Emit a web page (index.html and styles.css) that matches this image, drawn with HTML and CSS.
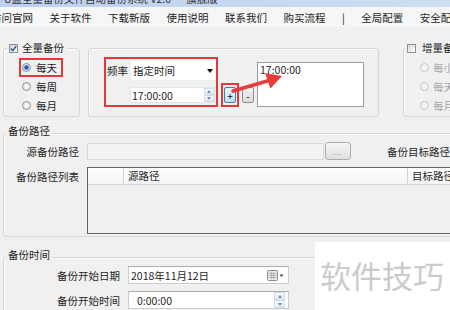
FILE: index.html
```html
<!DOCTYPE html>
<html lang="zh-CN">
<head>
  <meta charset="UTF-8" />
  <title>全量备份设置</title>
  <link rel="stylesheet" href="styles.css">
</head>
<body>
  <div class="window">
    <div class="titlebar"><span>U盘全量备份文件自动备份系统 V2.0 — 旗舰版</span></div>

    <div class="menubar">
      <span class="menu-item first">访问官网</span>
      <span class="menu-item">关于软件</span>
      <span class="menu-item">下载新版</span>
      <span class="menu-item">使用说明</span>
      <span class="menu-item">联系我们</span>
      <span class="menu-item">购买流程</span>
      <span class="menu-item">|</span>
      <span class="menu-item">全局配置</span>
      <span class="menu-item">安全配置</span>
    </div>

    <div class="top-row">
      <div class="group group-full">
        <div class="group-title">
          <span class="check">
            <svg width="7" height="7" viewBox="0 0 7 7"><path d="M0.8 3.6 L2.8 5.6 L6.2 1" fill="none" stroke="#3d5a98" stroke-width="1.5"/></svg>
          </span>全量备份
        </div>
        <div class="opts">
          <div class="opt marked"><span class="radio on"></span>每天</div>
          <div class="opt"><span class="radio"></span>每周</div>
          <div class="opt"><span class="radio"></span>每月</div>
        </div>
      </div>

      <div class="group group-freq">
        <div class="mark-box freq-box">
          <div class="freq-row">
            <span class="freq-label">频率</span>
            <div class="select">指定时间<span class="caret"></span></div>
          </div>
          <div class="time-input">17:00:00<span class="spin"><i class="up"></i><i class="down"></i></span></div>
        </div>
        <div class="mark-box add-box"><button class="btn btn-add">+</button></div>
        <button class="btn btn-minus">-</button>
        <div class="time-list">17:00:00</div>
      </div>

      <div class="group group-inc">
        <div class="group-title"><span class="check"></span>增量备份</div>
        <div class="opts">
          <div class="opt disabled"><span class="radio"></span>每小时</div>
          <div class="opt disabled"><span class="radio"></span>每天</div>
          <div class="opt disabled"><span class="radio"></span>每月</div>
        </div>
      </div>
    </div>

    <div class="group group-wide paths">
      <div class="group-title">备份路径</div>
      <div class="form-row">
        <span class="label">源备份路径</span>
        <div class="path-input"></div>
        <button class="btn btn-browse">...</button>
        <span class="target-label">备份目标路径</span>
      </div>
      <div class="form-row list-row">
        <span class="label">备份路径列表</span>
        <div class="path-table">
          <div class="path-head">
            <span class="col col-idx"></span>
            <span class="col col-src">源路径</span>
            <span class="col col-dst">目标路径</span>
          </div>
        </div>
      </div>
    </div>

    <div class="group group-wide times">
      <div class="group-title">备份时间</div>
      <div class="form-row">
        <span class="label wide">备份开始日期</span>
        <div class="field">2018年11月12日
          <svg class="cal" width="18" height="11" viewBox="0 0 18 11">
            <rect x="0.5" y="0.5" width="10" height="10" rx="1" fill="#e6e6e6" stroke="#8d8d8d"/>
            <path d="M2 3.5h7M2 5.5h7M2 7.5h7M4.5 2v7M6.5 2v7" stroke="#a9a9a9" stroke-width="0.8"/>
            <path d="M12.5 4.5h4l-2 2.5z" fill="#444"/>
          </svg>
        </div>
      </div>
      <div class="form-row">
        <span class="label wide">备份开始时间</span>
        <div class="field time">0:00:00<span class="spin"><i class="up"></i><i class="down"></i></span></div>
      </div>
    </div>

    <svg class="arrow" width="60" height="32" viewBox="0 0 60 32">
      <path d="M5 26 L41 15.5" stroke="#e8393b" stroke-width="3.5" stroke-linecap="round"/>
      <path d="M54 11 L42.4 23.5 L37.2 8.3 Z" fill="#e8393b"/>
    </svg>
    <div class="watermark">软件技巧</div>
  </div>
</body>
</html>
```

FILE: styles.css
```css
body {
  margin: 0;
  background: #f0f0f0;
  font-family: "Noto Sans CJK SC", "Liberation Sans", sans-serif;
  font-size: 10.5px;
  color: #1e1e1e;
  overflow: hidden;
}
.window {
  position: relative;
  width: 640px;
  height: 310px;
}
.titlebar {
  height: 7px;
  overflow: hidden;
  padding-left: 4px;
  background: linear-gradient(90deg, #bcd1ee, #d5e3f5);
  color: #333;
}
.titlebar span {
  display: block;
  line-height: 12px;
  margin-top: -7px;
}
.menubar {
  height: 20px;
  display: flex;
  align-items: center;
  gap: 16.5px;
  background: #f6f6f6;
  white-space: nowrap;
}
.menu-item.first {
  margin-left: -9px;
}

/* group boxes */
.group {
  border: 1px solid #d6d6d6;
  border-radius: 3px;
  box-shadow: inset 1px 1px 0 #fbfbfb;
  box-sizing: border-box;
}
.group-title {
  display: flex;
  align-items: center;
  gap: 4px;
  width: max-content;
  height: 12px;
  line-height: 12px;
  margin: -7px 0 0 3px;
  padding: 0 2px;
  background: #f0f0f0;
}
.check {
  width: 9px;
  height: 9px;
  border: 1px solid #8e8f8f;
  box-sizing: border-box;
  background: linear-gradient(135deg, #d6d6d6, #fdfdfd);
  display: flex;
  align-items: center;
  justify-content: center;
}
.radio {
  width: 9px;
  height: 9px;
  border-radius: 50%;
  border: 1px solid #8e8f8f;
  box-sizing: border-box;
  background: radial-gradient(circle, #fdfdfd, #d9d9d9);
  flex: none;
}
.radio.on {
  background: radial-gradient(circle, #1d4f9f 0, #2f66b8 1.6px, #a8c8ea 2.6px, #f4f4f4 3.4px);
}
.top-row {
  display: flex;
  margin: 21px 0 0 3px;
}
.group-full {
  width: 77px;
}
.opts {
  padding: 4px 0 1px;
}
.opt {
  width: 44px;
  height: 19px;
  display: flex;
  align-items: center;
  gap: 5px;
  margin-left: 15px;
  padding-left: 3px;
  box-sizing: border-box;
  white-space: nowrap;
}
.opt.marked {
  outline: 2px solid #e4393c;
  outline-offset: -2px;
}
.group-inc {
  width: 200px;
  margin-left: 24px;
}
.group-inc .group-title {
  margin-left: 1px;
  gap: 6px;
}
.group-inc .opt {
  margin-left: 13px;
  gap: 4px;
}
.opt.disabled {
  color: #a6a6a6;
}
.opt.disabled .radio {
  border-color: #c6c6c6;
  background: #f3f3f3;
}

/* frequency box */
.group-freq {
  width: 291px;
  margin-left: 8px;
  display: flex;
  align-items: flex-start;
  padding: 8px 0 0 15px;
}
.mark-box {
  border: 2px solid #e4393c;
  box-sizing: border-box;
}
.freq-box {
  width: 114px;
  height: 50px;
}
.freq-row {
  display: flex;
  align-items: center;
  gap: 3px;
  margin-top: 2px;
}
.freq-label {
  margin-left: 1px;
}
.select {
  width: 85px;
  height: 19px;
  background: #fff;
  display: flex;
  align-items: center;
  justify-content: space-between;
  padding: 0 3px 0 2px;
  box-sizing: border-box;
}
.caret {
  border-top: 4px solid #111;
  border-left: 3px solid transparent;
  border-right: 3px solid transparent;
}
.time-input {
  width: 85px;
  height: 16px;
  margin: 7px 0 0 24px;
  background: #fff;
  border: 1px solid #e2e5ea;
  box-sizing: border-box;
  display: flex;
  align-items: center;
  justify-content: space-between;
  padding-left: 1px;
}
.spin {
  width: 10px;
  height: 100%;
  display: flex;
  flex-direction: column;
}
.spin i {
  flex: 1;
  display: flex;
  align-items: center;
  justify-content: center;
  background: linear-gradient(#f5f8fb, #e3eaf2);
  border: 1px solid #d4dce6;
  box-sizing: border-box;
}
.spin i::after {
  content: "";
  border-left: 2.5px solid transparent;
  border-right: 2.5px solid transparent;
}
.spin .up::after {
  border-bottom: 3px solid #6f8fb3;
}
.spin .down::after {
  border-top: 3px solid #6f8fb3;
}
.add-box {
  margin: 26px 0 0 3px;
  padding: 2px 1px;
}
.btn {
  font-family: inherit;
  padding: 0;
  box-sizing: border-box;
  display: flex;
  align-items: center;
  justify-content: center;
  color: #111;
}
.btn-add {
  width: 12px;
  height: 16px;
  font-size: 10px;
  border: 1px solid #3c7fb1;
  border-radius: 2px;
  background: linear-gradient(#eaf6fd, #bfe4f8);
}
.btn-minus {
  width: 12px;
  height: 16px;
  font-size: 10px;
  margin: 30px 0 0 3px;
  border: 1px solid #8f8f8f;
  border-radius: 2px;
  background: linear-gradient(#f4f4f4, #d9d9d9);
}
.time-list {
  width: 107px;
  height: 45px;
  margin: 5px 0 0 3px;
  background: #fff;
  border: 1px solid #9d9d9d;
  box-sizing: border-box;
  padding: 1px 2px 0;
  line-height: 12px;
}

/* path and time groups */
.group-wide {
  width: 620px;
  margin-left: 3px;
}
.group-wide .group-title {
  margin: -9px 0 0 2px;
}
.paths {
  margin-top: 16px;
  padding-bottom: 2px;
}
.form-row {
  display: flex;
  align-items: center;
  margin-top: 5px;
  white-space: nowrap;
}
.label {
  width: 75px;
  text-align: right;
}
.label.wide {
  width: 116px;
}
.path-input {
  width: 237px;
  height: 17px;
  margin-left: 8px;
  background: #f3f3f3;
  border: 1px solid #dadada;
  box-sizing: border-box;
}
.btn-browse {
  width: 26px;
  height: 18px;
  margin-left: 1px;
  border: 1px solid #acacac;
  border-radius: 3px;
  background: linear-gradient(#f6f6f6, #e0e0e0);
  color: #8a8a8a;
  font-size: 8px;
  letter-spacing: 1px;
}
.target-label {
  margin-left: 36px;
}
.list-row {
  align-items: flex-start;
  margin-top: 7px;
}
.list-row .label {
  line-height: 17px;
  margin-top: 1px;
}
.path-table {
  width: 500px;
  height: 67px;
  margin-left: 8px;
  border: 1px solid #646464;
  box-sizing: border-box;
  background: #f0f0f0;
}
.path-head {
  display: flex;
  height: 16px;
  line-height: 16px;
  background: linear-gradient(#ffffff, #f2f3f5);
  border-bottom: 1px solid #d8d8d8;
}
.col {
  border-right: 1px solid #d5d5d5;
  padding-left: 4px;
  box-sizing: border-box;
}
.col-idx {
  width: 36px;
}
.col-src {
  width: 284px;
}
.col-dst {
  border-right: 0;
}
.times {
  margin-top: 20px;
  height: 80px;
}
.times .form-row:first-of-type {
  margin-top: 12px;
}
.times .form-row + .form-row {
  margin-top: 7px;
}
.field {
  width: 161px;
  height: 18px;
  margin-left: 8px;
  background: #fff;
  border: 1px solid #c9ccd2;
  border-top-color: #abadb3;
  box-sizing: border-box;
  display: flex;
  align-items: center;
  justify-content: space-between;
  padding: 0 3px 0 2px;
}
.field.time {
  padding: 0 3px 0 8px;
}
.field .spin {
  width: 11px;
}

/* overlays */
.arrow {
  position: absolute;
  left: 228px;
  top: 65px;
}
.watermark {
  position: absolute;
  left: 315px;
  top: 242px;
  width: 135px;
  height: 68px;
  box-sizing: border-box;
  padding: 17px 0 0 5px;
  background: #fff;
  color: #cbcbcb;
  font-size: 31px;
  line-height: 31px;
  white-space: nowrap;
}
```
